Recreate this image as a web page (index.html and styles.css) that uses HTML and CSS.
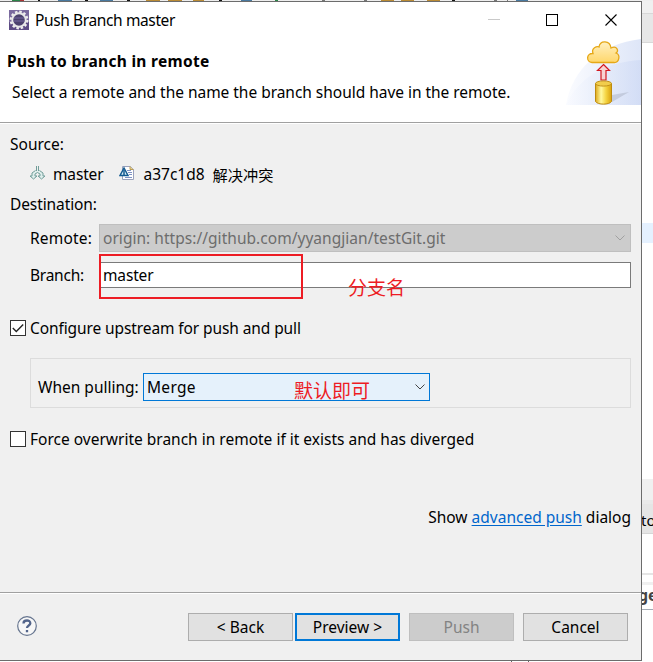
FILE: index.html
```
<!DOCTYPE html>
<html lang="en">
<head>
<meta charset="utf-8">
<title>Push Branch master</title>
<link rel="stylesheet" href="styles.css">
</head>
<body>
<div class="toolbar-strip">
<svg width="642" height="1" shape-rendering="crispEdges"><path stroke="#111" d="M38 .5h2M85 .5h3M127 .5h3M219 .5h3M452 .5h3"/><path stroke="#777" d="M322 .5h3M364 .5h3M494 .5h3M507 .5h1"/><path stroke="#a33" d="M20 .5h4"/><path stroke="#2a8548" d="M12 .5h8M275 .5h3"/><path stroke="#49799f" d="M58 .5h14M100 .5h13M241 .5h11M516 .5h12"/><path stroke="#ba8b35" d="M146 .5h14M168 .5h14M193 .5h11M381 .5h13M401 .5h13M427 .5h13"/></svg>
</div>
<div class="workspace">
<main class="dialog">
  <header class="header">
    <div class="header-copy">
      <div class="titlebar">
        <svg width="20" height="20" viewBox="0 0 20 20"><rect width="20" height="20" fill="#7a6a9e"/><path fill="#5d4c85" d="M0 12h20v8H0z"/><circle cx="10" cy="10" r="8.300" fill="none" stroke="#eee" stroke-width="2.200" stroke-dasharray="2.500 1.845"/><circle cx="10" cy="10" r="6.700" fill="#4b416d" stroke="#e8e8e8" stroke-width="1.900"/><path d="M5 8h10M4.500 11h11" stroke="#7468a0" stroke-width="1"/></svg>
        <span class="t w-title">Push Branch master</span>
      </div>
      <h1 class="t w-heading">Push to branch in remote</h1>
      <p class="t w-desc">Select a remote and the name the branch should have in the remote.</p>
    </div>
    <div class="header-art">
      <div class="window-controls">
        <svg width="153" height="36" fill="none" stroke="#000"><path stroke="#c9c9c9" d="M0 17.500h12"/><path shape-rendering="crispEdges" d="M58.500 12.500h11v11h-11z"/><path stroke-width="1.100" d="M117.500 12.500l11 11M128.500 12.500l-11 11"/></svg>
      </div>
      <svg class="banner" width="75" height="67" viewBox="0 0 75 67">
        <defs><linearGradient id="sky"><stop stop-color="#f8faff"/><stop offset="1" stop-color="#ccd8f4"/></linearGradient><linearGradient id="gold"><stop stop-color="#dda81b"/><stop offset=".35" stop-color="#fff9a0"/><stop offset=".65" stop-color="#f5d543"/><stop offset="1" stop-color="#d9a20c"/></linearGradient><linearGradient id="cloud" x2="0" y2="1"><stop stop-color="#fff0c1"/><stop offset="1" stop-color="#ffd76b"/></linearGradient></defs>
        <path fill="url(#sky)" opacity=".65" d="M0 67C6 31 34 6 75 1v66z"/><path fill="url(#sky)" opacity=".65" d="M0 67C12 41 37 24 75 22v45z"/>
        <path fill="#aeb6c8" opacity=".55" d="M46 64l17-10-17 3z"/>
        <path fill="url(#cloud)" stroke="#e6a817" stroke-width="1.300" d="M26 24.500C20 24 20 15 27 15.500C25 10 31 8 33 9C34 2 44 2 45 10C51 7 53 13 50 15C55 17 53 25 48 24.500z"/>
        <path fill="#f7d3d3" stroke="#d31820" stroke-width="1.200" d="M37.500 26.500l6 6H40v9.500h-5v-9.500h-3.500z"/>
        <path fill="url(#gold)" stroke="#bd8a10" d="M29.500 45.500v18c2 3.500 14 3.500 16 0v-18z"/><ellipse cx="37.500" cy="45.500" rx="8" ry="2.600" fill="#f1cd4c" stroke="#c29219"/>
      </svg>
    </div>
  </header>
  <section class="content">
    <div class="line"><span class="t">Source:</span></div>
    <div class="line commit">
      <svg class="branch-icon" width="16" height="16" viewBox="0 0 16 16" fill="#deeeec" stroke="#719d99"><path d="M7.500 1v5M9.500 1v5M6.500 5.500L3 8v3H1l3.500 3L8 11H6V9l2.500-1.500L11 9v2H9l3.500 3 3.500-3h-2V8l-3.500-2.500"/></svg>
      <span class="t w-master">master</span>
      <svg class="commit-icon" width="16" height="16" viewBox="0 0 16 16"><path fill="#fff" stroke="#9aa2bd" d="M3.500 1.500h8l3 3v10h-11z"/><path fill="#e9d28f" stroke="#b99c56" d="M11 1.500v3h3.500"/><path stroke="#7e92c4" d="M8 5.500h4M9 7.500h4M10 9.500h3M6 12.500h7"/><path fill="#d9eef5" stroke="#135a91" stroke-width="1.500" d="M1 10.500L5 3l4 7.500z"/><path stroke="#135a91" stroke-width="1.500" d="M5 5v5"/></svg>
      <span class="t">a37c1d8</span>
      <span class="cjk">解决冲突</span>
    </div>
    <div class="line"><span class="t w-dest">Destination:</span></div>
    <div class="field remote">
      <span class="t w-remote">Remote:</span>
      <div class="box disabled"><span class="t w-origin">origin: https://github.com/yyangjian/testGit.git</span><svg width="10" height="6" fill="none" stroke="#a0a0a0"><path d="M.5.5L5 5 9.500.5"/></svg></div>
    </div>
    <div class="field branch">
      <span class="t w-branch">Branch:</span>
      <div class="box input"><span class="t w-master">master</span>
      <div class="mark"></div><span class="note note-branch">分支名</span></div>
    </div>
    <div class="check"><span class="checkbox"><svg width="14" height="14" fill="none" stroke="#222" stroke-width="1.400"><path d="M1.800 7l3.500 3.500L12.200 3.500"/></svg></span><span class="t w-configure">Configure upstream for push and pull</span></div>
    <div class="group">
      <span class="t">When pulling:</span>
      <div class="combo"><span class="t w-merge">Merge</span><svg width="10" height="6" fill="none" stroke="#444"><path d="M.5.5L5 5 9.500.5"/></svg><span class="note note-default">默认即可</span></div>
    </div>
    <div class="check"><span class="checkbox"></span><span class="t">Force overwrite branch in remote if it exists and has diverged</span></div>
    <p class="advanced"><span class="t">Show <a>advanced push</a> dialog</span></p>
  </section>
  <footer class="footer">
    <svg class="help" width="20" height="20"><circle cx="10" cy="10" r="9.300" fill="#f7f7f7" stroke="#66758f" stroke-width="1.200"/><path d="M6.500 7.500C6.500 3.500 13.500 3.500 13.300 7.400C13.200 9.500 10 9.500 10 12M10 14v2.300" fill="none" stroke="#53658b" stroke-width="2.300"/></svg>
    <div class="button"><span class="t">&lt; Back</span></div>
    <div class="button primary"><span class="t">Preview &gt;</span></div>
    <div class="button off"><span class="t">Push</span></div>
    <div class="button cancel"><span class="t">Cancel</span></div>
  </footer>
</main>
<aside class="editor">
  <div class="pane-top"></div><div class="pane-tab"></div><div class="pane-text"><div class="current-line"></div></div>
  <div class="pane-gap"></div><div class="pane-title">to</div><div class="pane-body"></div><div class="pane-gutter"></div><div class="pane-head">ge</div>
</aside>
</div>
<div class="bottom-strip"><i></i><i></i></div>
</body>
</html>
```
FILE: styles.css
```
* { box-sizing: border-box; }
body { margin: 0; width: 653px; height: 662px; overflow: hidden; background: #fff; color: #000; font: 16px/20px "Noto Sans", "Noto Sans CJK SC", sans-serif; }
svg { display: block; flex: none; }
h1, p { margin: 0; }
.t { display: block; white-space: nowrap; font-size: 15.5px; }
.toolbar-strip { height: 1px; background: #eee; }
.workspace { display: flex; height: 660px; }
.dialog { width: 642px; height: 660px; border-top: 1px solid #6c6c6c; border-right: 1px solid #6c6c6c; border-bottom: 1px solid #6c6c6c; background: #f0f0f0; display: flex; flex-direction: column; }
.header { height: 122px; flex: none; background: #fff; border-bottom: 1px solid #fff; box-shadow: inset 0 -1px #a0a0a0; display: flex; justify-content: space-between; }
.header-copy { padding-top: 8px; width: 488px; }
.titlebar { display: flex; gap: 6px; padding-left: 9px; height: 20px; }
h1.t { margin: 21px 0 0 7px; font-weight: 700; }
p.w-desc { margin: 11px 0 0 12px; letter-spacing: -.03px; }
.w-title { letter-spacing: -.38px; }
.w-heading { letter-spacing: .3px; }
.w-master { letter-spacing: -.15px; }
.w-dest { letter-spacing: -.1px; }
.w-remote { letter-spacing: .2px; }
.w-branch { letter-spacing: -.25px; }
.w-origin { letter-spacing: .035px; }
.w-configure { letter-spacing: -.1px; }
.w-merge { letter-spacing: .3px; margin-left: -1px; }
.header-art { width: 153px; display: flex; flex-direction: column; align-items: flex-end; }
.content { height: 469px; flex: none; padding: 10px 10px 0; border-bottom: 1px solid #a0a0a0; }
.line { height: 30px; display: flex; }
.branch-icon { margin: 1px 8px 0 19px; }
.commit-icon { margin: 1px 8px 0 16px; }
.cjk { font: 15.2px/20px "Noto Sans CJK SC", sans-serif; margin-left: 8px; }
.field { display: grid; grid-template-columns: 69px 532px; padding-left: 20px; align-items: center; }
.remote { height: 28px; }
.branch { margin-top: 10px; height: 26px; }
.box { position: relative; border: 1px solid #7a7a7a; background: #fff; padding: 0 5px 0 3px; display: flex; align-items: center; justify-content: space-between; }
.disabled { height: 28px; background: #ccc; border-color: #bfbfbf; color: #6d6d6d; }
.input { height: 26px; }
.mark { position: absolute; left: -1px; top: -9px; width: 204px; height: 45px; border: 2px solid #ed1c24; }
.note { position: absolute; color: #ed1c24; font: 19px/24px "Noto Sans CJK SC", sans-serif; white-space: nowrap; }
.note-branch { left: 248px; top: 12px; }
.note-default { left: 150px; top: 4px; }
.check { display: flex; gap: 4px; height: 20px; margin-top: 30px; align-items: center; }
.checkbox { width: 16px; height: 16px; border: 1px solid #333; background: #fff; }
.group { margin: 20px 0 0 20px; width: 601px; height: 50px; border: 1px solid #dcdcdc; display: flex; padding: 14px 0 0 7px; align-items: flex-start; }
.group > .t { width: 105px; padding-top: 4px; }
.combo { position: relative; width: 287px; height: 28px; border: 1px solid #0078d7; background: #e5f1fb; display: flex; align-items: center; justify-content: space-between; padding: 0 4px; }
.group + .check { margin-top: 21px; }
.advanced { display: flex; justify-content: flex-end; margin-top: 58px; }
.advanced a { color: #0066cc; text-decoration: underline; text-underline-offset: 2px; }
.footer { height: 67px; border-top: 1px solid #fff; display: flex; padding: 19px 0 0 17px; }
.help { margin: 3px 151px 0 0; }
.button { width: 105px; height: 28px; border: 1px solid #adadad; background: #e1e1e1; display: flex; align-items: center; justify-content: center; }
.primary { border: 2px solid #0078d7; margin: 0 9px 0 2px; }
.off { background: #ccc; border-color: #bfbfbf; color: #838383; margin-right: 9px; }
.editor { width: 11px; overflow: hidden; }
.pane-top { height: 13px; background: #f0f0f0; border-bottom: 1px solid #d8d8d8; }
.pane-tab { height: 29px; background: #e7e7e7; border-bottom: 1px solid #d8d8d8; }
.pane-text { height: 436px; padding-top: 180px; }
.current-line { height: 20px; background: #e5f1ff; }
.pane-gap { height: 25px; background: #f0f0f0; border-bottom: 4px solid #e9e9e9; }
.pane-title { height: 30px; background: #e5e5e5; border-bottom: 1px solid #d6d6d6; font-size: 15px; line-height: 33px; text-indent: -1px; }
.pane-body { height: 41px; border-bottom: 2px solid #e5e5e5; }
.pane-gutter { height: 10px; border-bottom: 3px solid #f0f0f0; }
.pane-head { height: 25px; border-bottom: 1px solid #a3abb5; font-weight: 700; line-height: 20px; text-indent: -4px; color: #444; }
.bottom-strip { height: 1px; display: flex; padding-left: 511px; gap: 16px; }
.bottom-strip i { width: 1px; height: 1px; background: #666; }
```
